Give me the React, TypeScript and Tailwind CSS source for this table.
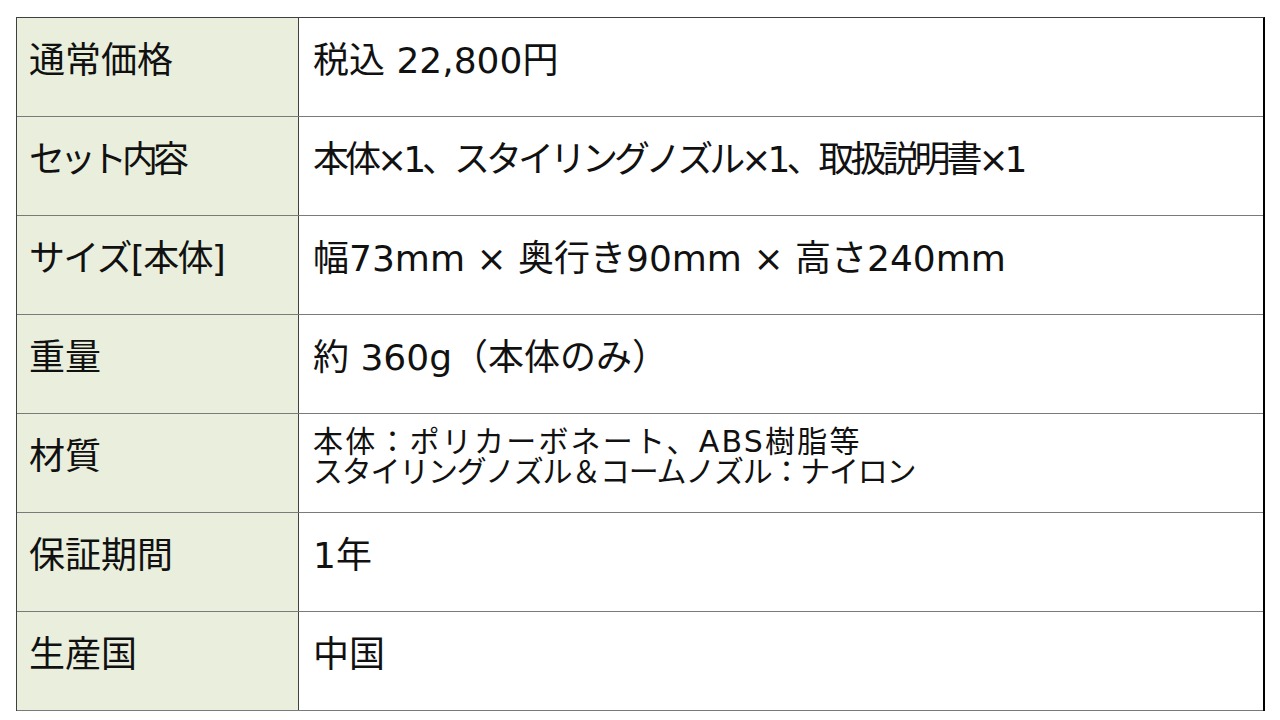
import React from "react";

const rows: { label: React.ReactNode; value: React.ReactNode }[] = [
  { label: "通常価格", value: "税込 22,800円" },
  {
    label: <span className="tracking-[-5px]">セット内容</span>,
    value: <span className="tracking-[-4px]">本体×1、スタイリングノズル×1、取扱説明書×1</span>,
  },
  { label: <span className="tracking-[-1.7px]">サイズ[本体]</span>, value: "幅73mm × 奥行き90mm × 高さ240mm" },
  { label: "重量", value: "約 360g（本体のみ）" },
  {
    label: "材質",
    value: (
      <div className="text-[30px] leading-[30px]">
        <div className="tracking-[2.2px]">本体：ポリカーボネート、ABS樹脂等</div>
        <div className="tracking-[-1.25px]">スタイリングノズル＆コームノズル：ナイロン</div>
      </div>
    ),
  },
  { label: "保証期間", value: "1年" },
  { label: "生産国", value: "中国" },
];

export default function App() {
  return (
    <div
      className="w-[1280px] h-[720px] bg-white pt-[17px] pl-[16px]"
      style={{ fontFamily: '"DejaVu Sans", "Noto Sans CJK JP", sans-serif' }}
    >
      <div className="w-[1249px] border-l border-t border-[#404040] border-r-2 border-r-black">
        {rows.map((r, i) => (
          <div key={i} className="flex h-[99px] border-b border-[#7a7a7a]">
            <div className="w-[282px] shrink-0 bg-[#e9efdc] border-r border-[#404040] flex items-center pl-[12px] pb-[12px] text-[36px] text-[#111]">
              {r.label}
            </div>
            <div className="flex-1 flex items-center pl-[14px] pb-[12px] text-[36px] text-[#111]">
              {r.value}
            </div>
          </div>
        ))}
      </div>
    </div>
  );
}
